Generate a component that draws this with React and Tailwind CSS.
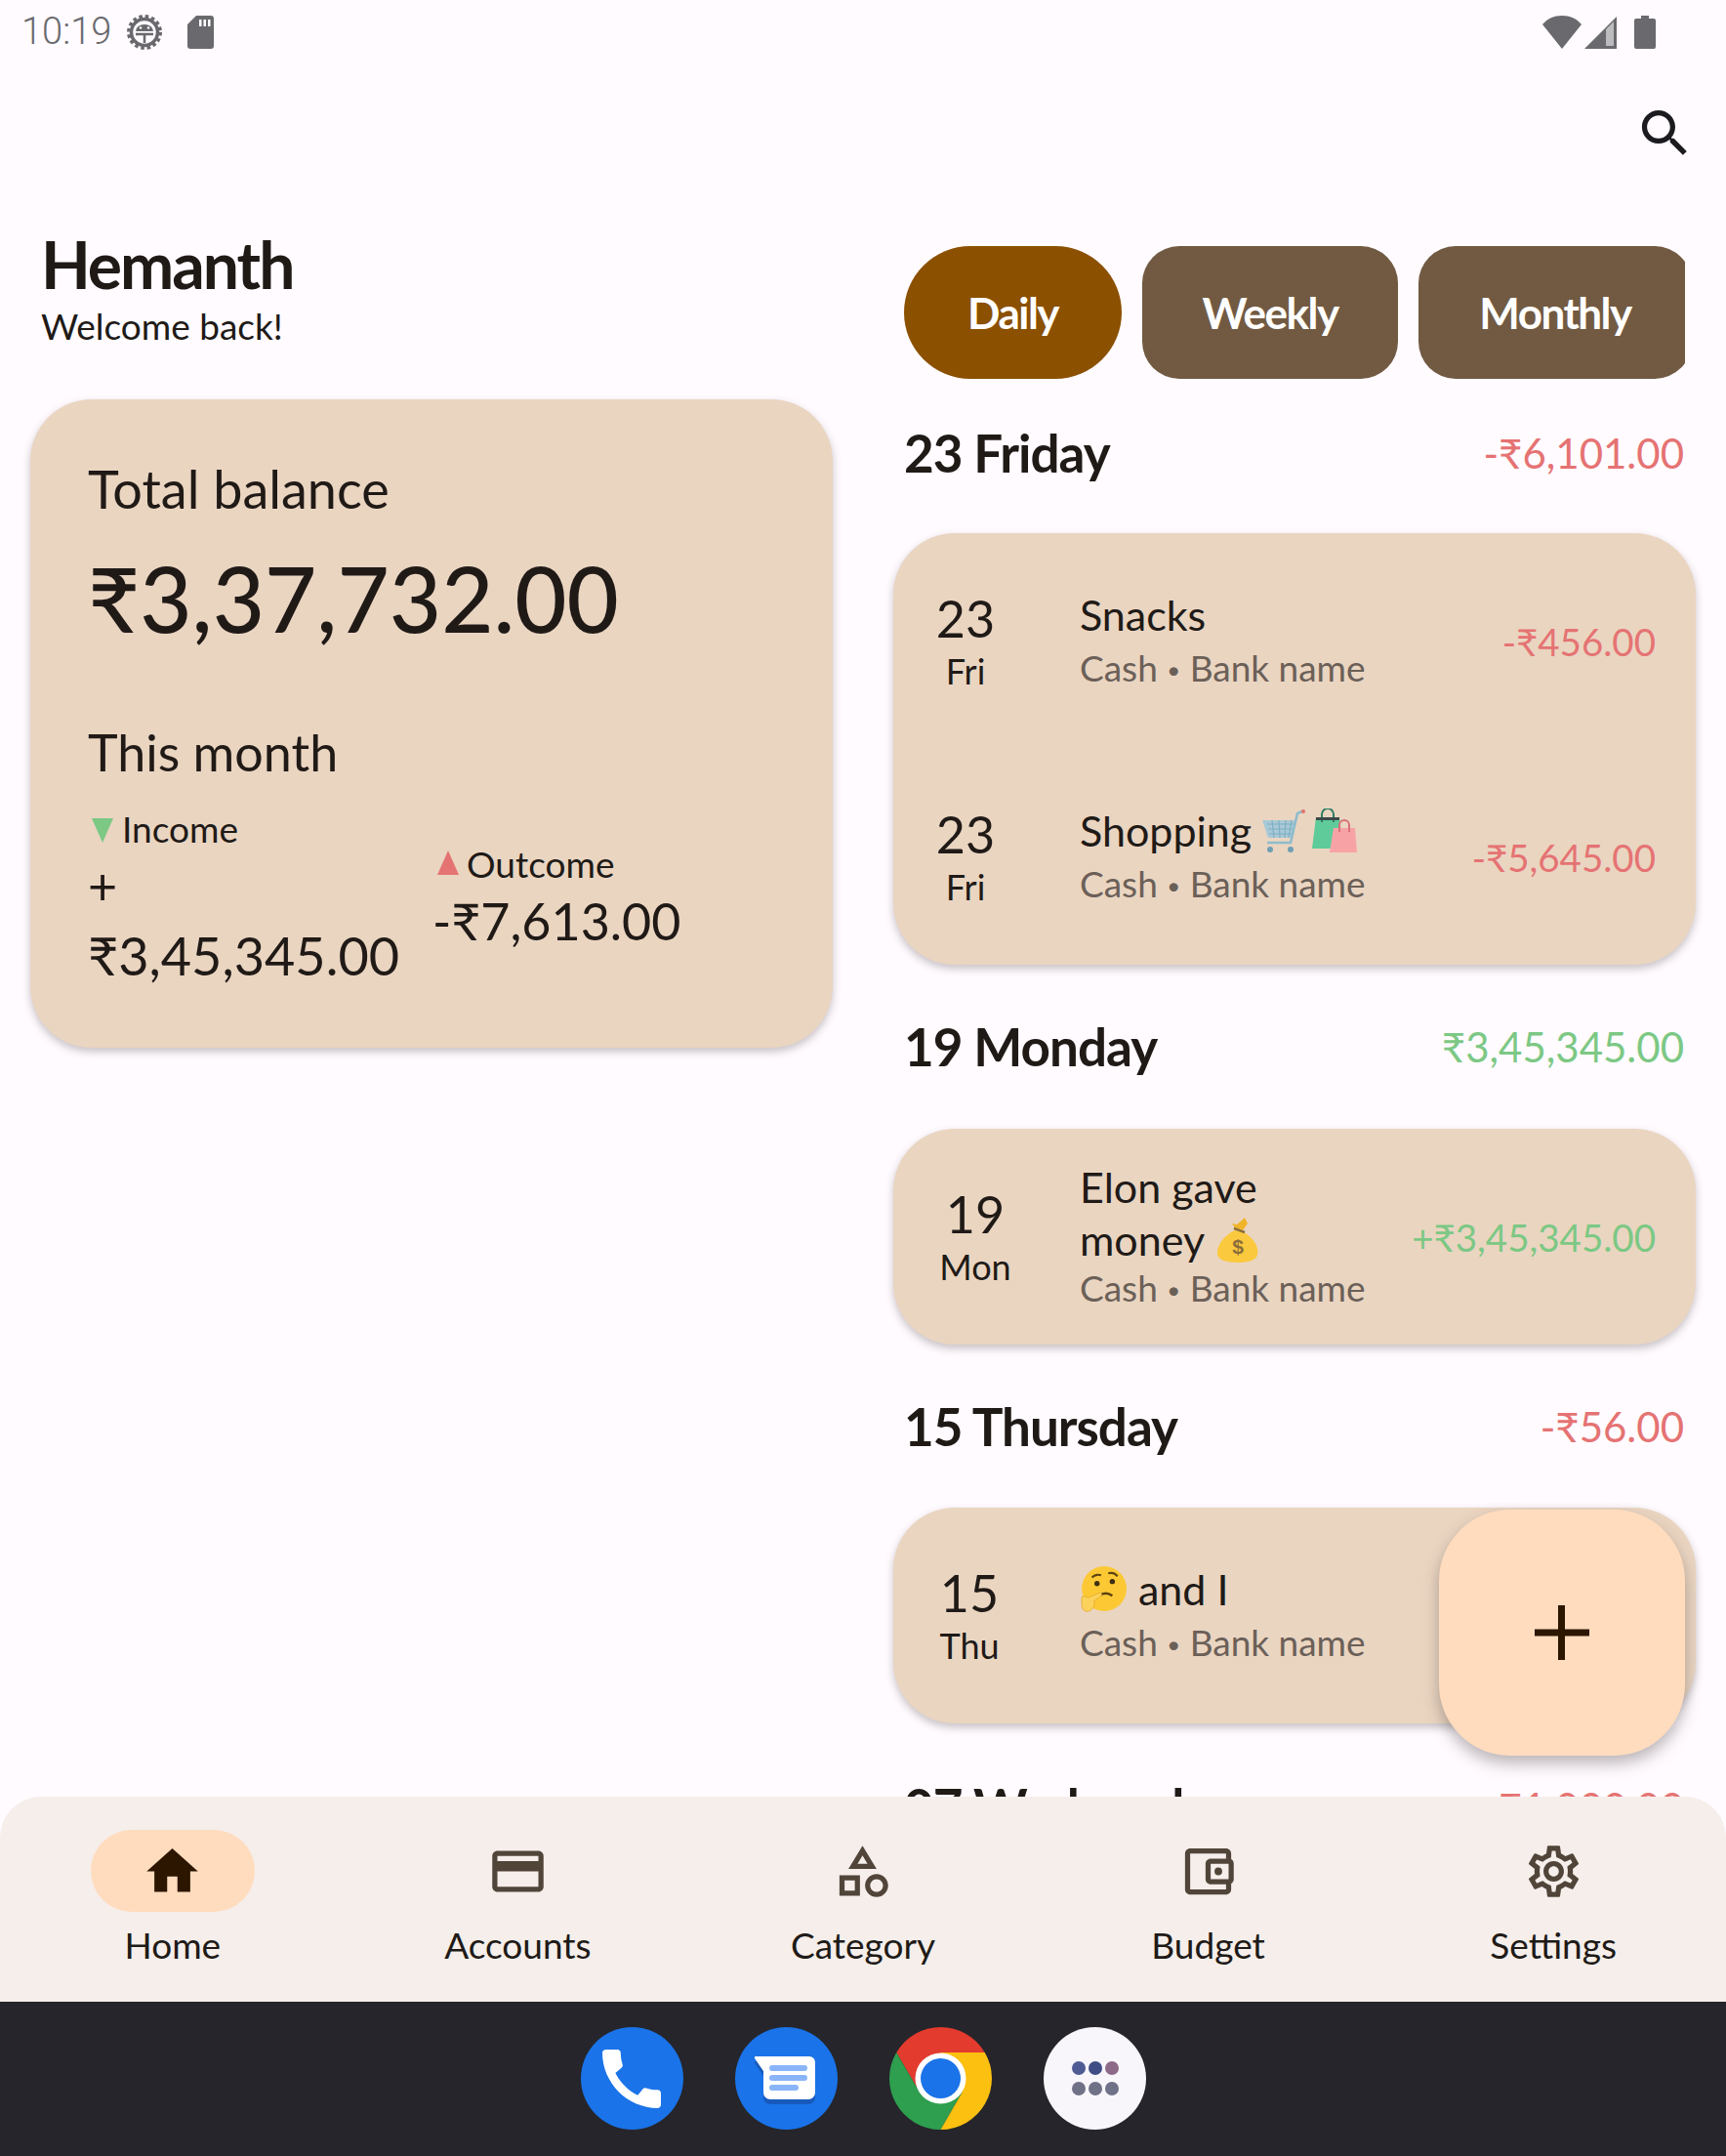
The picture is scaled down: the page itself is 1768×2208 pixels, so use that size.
import React from 'react'

const ICONS = {
    home: 'M10 20v-6h4v6h5v-8h3L12 3 2 12h3v8z',
    card: 'M20 4H4c-1.11 0-1.99.89-1.99 2L2 18c0 1.11.89 2 2 2h16c1.11 0 2-.89 2-2V6c0-1.11-.89-2-2-2zm0 14H4v-6h16v6zm0-10H4V6h16v2z',
    category: 'M12 2l-5.5 9h11L12 2zm0 3.84L13.93 9h-3.87L12 5.84zM17.5 13c-2.49 0-4.5 2.01-4.5 4.5s2.01 4.5 4.5 4.5 4.5-2.01 4.5-4.5-2.01-4.5-4.5-4.5zm0 7c-1.38 0-2.5-1.12-2.5-2.5s1.12-2.5 2.5-2.5 2.5 1.12 2.5 2.5-1.12 2.5-2.5 2.5zM3 21.5h8v-8H3v8zm2-6h4v4H5v-4z',
    wallet: 'M21 7.28V5c0-1.1-.9-2-2-2H5c-1.11 0-2 .9-2 2v14c0 1.1.89 2 2 2h14c1.1 0 2-.9 2-2v-2.28c.59-.35 1-.98 1-1.72V9c0-.74-.41-1.37-1-1.72zM20 9v6h-7V9h7zM5 19V5h14v2h-6c-1.1 0-2 .9-2 2v6c0 1.1.9 2 2 2h6v2H5z M16 10.5a1.5 1.5 0 1 0 0 3a1.5 1.5 0 1 0 0-3z',
    settings: 'M19.43 12.98c.04-.32.07-.64.07-.98 0-.34-.03-.66-.07-.98l2.11-1.65c.19-.15.24-.42.12-.64l-2-3.46c-.09-.16-.26-.25-.44-.25-.06 0-.12.01-.17.03l-2.49 1c-.52-.4-1.08-.73-1.69-.98l-.38-2.65C14.46 2.18 14.25 2 14 2h-4c-.25 0-.46.18-.49.42l-.38 2.65c-.61.25-1.17.59-1.69.98l-2.49-1c-.06-.02-.12-.03-.18-.03-.17 0-.34.09-.43.25l-2 3.46c-.13.22-.07.49.12.64l2.11 1.65c-.04.32-.07.65-.07.98 0 .33.03.66.07.98l-2.11 1.65c-.19.15-.24.42-.12.64l2 3.46c.09.16.26.25.44.25.06 0 .12-.01.17-.03l2.49-1c.52.4 1.08.73 1.69.98l.38 2.65c.03.24.24.42.49.42h4c.25 0 .46-.18.49-.42l.38-2.65c.61-.25 1.17-.59 1.69-.98l2.49 1c.06.02.12.03.18.03.17 0 .34-.09.43-.25l2-3.46c.12-.22.07-.49-.12-.64l-2.11-1.65zm-1.98-1.71c.04.31.05.52.05.73 0 .21-.02.43-.05.73l-.14 1.13.89.7 1.08.84-.7 1.21-1.27-.51-1.04-.42-.9.68c-.43.32-.84.56-1.25.73l-1.06.43-.16 1.13-.2 1.35h-1.4l-.19-1.35-.16-1.13-1.06-.43c-.43-.18-.83-.41-1.23-.71l-.91-.7-1.06.43-1.27.51-.7-1.21 1.08-.84.89-.7-.14-1.13c-.03-.31-.05-.54-.05-.74s.02-.43.05-.73l.14-1.13-.89-.7-1.08-.84.7-1.21 1.27.51 1.04.42.9-.68c.43-.32.84-.56 1.25-.73l1.06-.43.16-1.13.2-1.35h1.39l.19 1.35.16 1.13 1.06.43c.43.18.83.41 1.23.71l.91.7 1.06-.43 1.27-.51.7 1.21-1.07.85-.89.7.14 1.13zM12 8c-2.21 0-4 1.79-4 4s1.79 4 4 4 4-1.79 4-4-1.79-4-4-4zm0 6c-1.1 0-2-.9-2-2s.9-2 2-2 2 .9 2 2-.9 2-2 2z',
    search: 'M15.5 14h-.79l-.28-.27C15.41 12.59 16 11.11 16 9.5 16 5.91 13.09 3 9.5 3S3 5.91 3 9.5 5.91 16 9.5 16c1.61 0 3.09-.59 4.23-1.57l.27.28v.79l5 4.99L20.49 19l-4.99-5zm-6 0C7.01 14 5 11.99 5 9.5S7.01 5 9.5 5 14 7.01 14 9.5 11.99 14 9.5 14z',
    call: 'M20.01 15.38c-1.23 0-2.42-.2-3.53-.56-.35-.12-.74-.03-1.01.24l-1.57 1.97c-2.83-1.35-5.48-3.9-6.89-6.83l1.95-1.66c.27-.28.35-.67.24-1.02-.37-1.11-.56-2.3-.56-3.53 0-.54-.45-.99-.99-.99H4.19C3.65 3 3 3.24 3 3.99 3 13.28 10.73 21 20.01 21c.71 0 .99-.63.99-1.18v-3.45c0-.54-.45-.99-.99-.99z',
}

const Icon = ({ name, className }) => (
    <svg viewBox="0 0 24 24" fill="currentColor" className={className}>
        <path d={ICONS[name]} />
    </svg>
)

const GearStatus = () => (
    <svg viewBox="0 0 38 38" className="w-[38px] h-[38px]">
        <circle cx="19" cy="19" r="16" fill="none" stroke="#6a696e" strokeWidth="4" strokeDasharray="3.5 2.8" />
        <circle cx="19" cy="19" r="13.5" fill="none" stroke="#6a696e" strokeWidth="3.5" />
        <path d="M10 18a9 7 0 0 1 18 0z" fill="#6a696e" />
        <circle cx="15" cy="14.5" r="1.2" fill="#fff" />
        <circle cx="23" cy="14.5" r="1.2" fill="#fff" />
        <path d="M10 21h18M19 21v9" stroke="#6a696e" strokeWidth="2.5" />
    </svg>
)

const SdCard = () => (
    <svg viewBox="0 0 27 34" className="w-[27px] h-[34px]">
        <path d="M9 0h15a3 3 0 0 1 3 3v28a3 3 0 0 1-3 3H3a3 3 0 0 1-3-3V9z" fill="#6a696e" />
        <path d="M12 4h2.500v7H12zM16.500 4H19v7h-2.500zM21 4h2.500v7H21z" fill="#fff" />
    </svg>
)

const StatusIcons = () => (
    <div className="flex items-center">
        <svg viewBox="0 0 40 34" className="w-[40px] h-[34px]">
            <path d="M20 34L0 9C5 3 12 0 20 0s15 3 20 9z" fill="#6a696e" />
        </svg>
        <svg viewBox="0 0 33 34" className="w-[33px] h-[34px] ml-[3px]">
            <path d="M0 34L33 1v33z" fill="#6a696e" />
            <path d="M22 31V14l8-8v25z" fill="#fff" opacity="0.55" />
        </svg>
        <svg viewBox="0 0 22 34" className="w-[22px] h-[34px] ml-[18px]">
            <path d="M7 0h8v3h5a2 2 0 0 1 2 2v27a2 2 0 0 1-2 2H2a2 2 0 0 1-2-2V5a2 2 0 0 1 2-2h5z" fill="#6a696e" />
        </svg>
    </div>
)

const CartEmoji = () => (
    <svg viewBox="0 0 46 46" className="w-[46px] h-[46px] shrink-0">
        <path d="M2 12h33l-3 18H8z" fill="#a9c9d6" />
        <path d="M7 16h27M8 21h25M9 26h23M12 12l2 18M19 12l1 18M26 12l-1 18M32 12l-3 18" stroke="#7fb0c4" strokeWidth="1.2" />
        <path d="M45 2l-7 3-7 30H7" fill="none" stroke="#8fbccc" strokeWidth="2.6" />
        <circle cx="44" cy="3" r="2" fill="#e9716a" />
        <circle cx="10" cy="42" r="3" fill="#6f9fb2" />
        <circle cx="31" cy="42" r="3" fill="#6f9fb2" />
    </svg>
)

const BagsEmoji = () => (
    <svg viewBox="0 0 46 46" className="w-[46px] h-[46px] shrink-0 ml-[7px]">
        <path d="M4 9h24l4 32H0z" fill="#5fcb9a" />
        <path d="M10 14V6a6 6 0 0 1 12 0v8" fill="none" stroke="#2f7f62" strokeWidth="2" />
        <path d="M4 9h24v3H4z" fill="#3a4a4a" />
        <path d="M22 20h22l2 25H18z" fill="#f7a3a6" />
        <path d="M28 24v-7a5 5 0 0 1 10 0v7" fill="none" stroke="#d9707a" strokeWidth="2" />
    </svg>
)

const MoneyEmoji = () => (
    <svg viewBox="0 0 44 46" className="w-[44px] h-[46px] shrink-0 ml-[12px]">
        <path d="M26 14C38 20 44 30 42 38c-1 5-8 8-20 8S2 43 1 38C0 28 8 18 19 13z" fill="#fbc93d" />
        <path d="M20 12l-4-6 5 1 8-7 3 6-5 7z" fill="#f0b429" />
        <path d="M18 11l11 4" stroke="#8a6d3b" strokeWidth="2.4" />
        <text x="22" y="37" textAnchor="middle" fontSize="21" fontWeight="700" fill="#8a6d3b" fontFamily="'Liberation Sans', sans-serif">$</text>
    </svg>
)

const ThinkEmoji = () => (
    <svg viewBox="0 0 46 46" className="w-[48px] h-[48px] shrink-0">
        <ellipse cx="24" cy="22" rx="22" ry="22" fill="#fcc935" />
        <path d="M12 11c3-3 7-3 9-2M28 7c4-1 7 0 9 3" fill="none" stroke="#5a4210" strokeWidth="2" />
        <circle cx="17" cy="17" r="2.6" fill="#3f2f10" />
        <circle cx="32" cy="15" r="2.6" fill="#3f2f10" />
        <path d="M19 29c4-3 9-3 13 0" fill="none" stroke="#5a4210" strokeWidth="2.2" />
        <path d="M2 30c2-1 5 0 6 1l12-5c2 0 2 3 0 4l-6 4c1 3 0 7-3 9-4 3-8 1-9-4z" fill="#fbd35c" stroke="#e7a92e" strokeWidth="0.8" />
    </svg>
)

const Amount = ({ children, green, className }) => (
    <span className={`${green ? 'text-[#7cc884]' : 'text-[#e57373]'} ${className}`}>{children}</span>
)

const Row = ({ day, week, dateClass, cashClass = 'mt-[3px]', children, amount, green }) => (
    <div className="h-[221px] flex items-center">
        <div className={`flex flex-col items-center w-[80px] -mt-[3px] ${dateClass}`}>
            <span className="text-[52px] leading-[64px] text-[#201a17]">{day}</span>
            <span className="text-[36px] leading-[44px] text-[#201a17]">{week}</span>
        </div>
        <div className="flex-1 flex flex-col pl-[77px] text-[#201a17]">
            {children}
            <span className={`text-[37px] leading-[48px] text-[#6b6058] ${cashClass}`}>
                Cash <span className="text-[24px] align-[3px]">•</span> Bank name
            </span>
        </div>
        <Amount green={green} className="text-[38.5px] leading-[48px] shrink-0">{amount}</Amount>
    </div>
)

const Title = ({ children }) => (
    <div className="flex items-center text-[43px] leading-[54px] h-[54px]">{children}</div>
)

const DayHeader = ({ title, amount, green, className }) => (
    <div className={`h-[80px] flex items-center justify-between ml-[11px] mr-[43px] ${className}`}>
        <span className="text-[53px] font-bold tracking-[-1px] text-[#201a17]">{title}</span>
        <Amount green={green} className="text-[42px]">{amount}</Amount>
    </div>
)

const Card = ({ children, className }) => (
    <div className={`bg-[#ead5c1] rounded-[63px] shadow-[0_4px_8px_rgba(70,60,60,0.3)] pl-[34px] pr-[41px] ${className}`}>{children}</div>
)

const Chip = ({ children, active, className }) => (
    <div className={`h-[136px] flex items-center justify-center shrink-0 text-white text-[44px] font-bold tracking-[-1.5px] ${active ? 'bg-[#8b5000] rounded-[68px]' : 'bg-[#725a42] rounded-[38px]'} ${className}`}>
        {children}
    </div>
)

const NavItem = ({ icon, label, active }) => (
    <div className="flex-1 flex flex-col items-center">
        <div className={`w-[168px] h-[84px] rounded-[42px] flex items-center justify-center ${active ? 'bg-[#ffdcbe] text-[#2c1600]' : 'text-[#51453a]'}`}>
            <Icon name={icon} className="w-[63px] h-[63px]" />
        </div>
        <span className="mt-[11px] text-[37px] leading-[46px] text-[#201a17]">{label}</span>
    </div>
)

const Chrome = () => (
    <svg viewBox="0 0 105 105" className="w-[105px] h-[105px]">
        <path d="M97.800 26A52.500 52.500 0 0 0 7.200 26L30 65 52.500 52.500V26z" fill="#e33b2e" />
        <path d="M7.200 26A52.500 52.500 0 0 0 52.500 105L75 66 52.500 52.500 30 65z" fill="#2e9e4f" />
        <path d="M97.800 26A52.500 52.500 0 0 1 52.500 105L75 66 52.500 52.500V26z" fill="#fcc010" />
        <circle cx="52.500" cy="52.500" r="26" fill="#fff" />
        <circle cx="52.500" cy="52.500" r="20.500" fill="#1a73e8" />
    </svg>
)

const Dock = () => (
    <div className="h-[158px] bg-[#25252b] flex items-start pt-[26px] justify-center gap-[53px]">
        <div className="w-[105px] h-[105px] rounded-full bg-[#1a73e8] flex items-center justify-center">
            <Icon name="call" className="w-[80px] h-[80px] text-white" />
        </div>
        <div className="w-[105px] h-[105px] rounded-full bg-[#1a73e8]">
            <svg viewBox="0 0 105 105" className="w-[105px] h-[105px]">
                <path d="M22 31h55a5 5 0 0 1 5 7v30a7 7 0 0 1-7 7H36a7 7 0 0 1-7-7V46L20 33a1.500 1.500 0 0 1 2-2z" fill="#185abc" transform="translate(0 4)" />
                <path d="M22 30h54a6 6 0 0 1 6 6v31a7 7 0 0 1-7 7H36a7 7 0 0 1-7-7V45L20 32a1.500 1.500 0 0 1 2-2z" fill="#fff" />
                <rect x="35" y="39" width="39" height="6" rx="3" fill="#8ab4f8" />
                <rect x="35" y="49" width="39" height="6" rx="3" fill="#8ab4f8" />
                <rect x="35" y="59" width="30" height="6" rx="3" fill="#8ab4f8" />
            </svg>
        </div>
        <Chrome />
        <div className="w-[105px] h-[105px] rounded-full bg-[#f8f6fb]">
            <svg viewBox="0 0 105 105" className="w-[105px] h-[105px]">
                <circle cx="36" cy="42" r="7" fill="#4f5c94" />
                <circle cx="53" cy="42" r="7" fill="#3f4c85" />
                <circle cx="70" cy="42" r="7" fill="#8c6a88" />
                <circle cx="36" cy="63" r="7" fill="#6f7186" />
                <circle cx="53" cy="63" r="7" fill="#6f7186" />
                <circle cx="70" cy="63" r="7" fill="#6f7186" />
            </svg>
        </div>
    </div>
)

const App = () => {
    return (
        <div className="w-[1768px] h-[2208px] flex flex-col overflow-hidden bg-[#fffbff] font-['Lato',sans-serif] text-[#201a17]">
            <div className="h-[65px] shrink-0 flex items-center justify-between pl-[22px] pr-[72px]">
                <div className="flex items-center">
                    <span className="font-['Roboto',sans-serif] font-light text-[38px] text-[#6a696e]">10:19</span>
                    <span className="ml-[15px]"><GearStatus /></span>
                    <span className="ml-[25px]"><SdCard /></span>
                </div>
                <StatusIcons />
            </div>

            <div className="flex-1 min-h-0 relative overflow-hidden">
                <div className="h-[187px] flex justify-end pr-[31px] pt-[40px]">
                    <Icon name="search" className="w-[63px] h-[63px] text-[#1c1b1f]" />
                </div>
                <div className="flex">
                    <div className="w-[884px] shrink-0">
                        <div className="h-[178px] pl-[42px] -mt-[21px]">
                            <div className="text-[66px] leading-[80px] font-bold tracking-[-2px]">Hemanth</div>
                            <div className="text-[37px] leading-[46px]">Welcome back!</div>
                        </div>
                        <div className="ml-[31px] w-[822px] h-[664px] bg-[#ead5c1] rounded-[63px] shadow-[0_4px_8px_rgba(70,60,60,0.3)] pl-[59px] pt-[57px] text-[#201a17]">
                            <div className="text-[54px] leading-[70px]">Total balance</div>
                            <div className="mt-[18px] text-[92px] leading-[118px] font-medium">₹3,37,732.00</div>
                            <div className="mt-[62px] text-[52px] leading-[72px]">This month</div>
                            <div className="mt-[21px] flex items-center">
                                <div className="w-[353px]">
                                    <div className="flex items-center text-[37px] leading-[44px]">
                                        <svg viewBox="0 0 22 28" className="w-[22px] h-[28px] ml-[4px] mr-[9px]"><path d="M0 3h22L11 28z" fill="#7cc884" /></svg>
                                        Income
                                    </div>
                                    <div className="text-[52px] leading-[72px]">+</div>
                                    <div className="text-[54px] leading-[72px]">₹3,45,345.00</div>
                                </div>
                                <div>
                                    <div className="flex items-center text-[37px] leading-[44px]">
                                        <svg viewBox="0 0 22 28" className="w-[22px] h-[28px] ml-[5px] mr-[8px]"><path d="M0 25h22L11 0z" fill="#e57373" /></svg>
                                        Outcome
                                    </div>
                                    <div className="text-[52px] leading-[72px]">-₹7,613.00</div>
                                </div>
                            </div>
                        </div>
                    </div>

                    <div className="flex-1 min-w-0 pl-[31px]">
                        <div className="w-[800px] ml-[11px] overflow-hidden flex gap-[21px]">
                            <Chip active className="w-[223px]">Daily</Chip>
                            <Chip className="w-[262px]">Weekly</Chip>
                            <Chip className="w-[280px]">Monthly</Chip>
                        </div>
                        <DayHeader title="23 Friday" amount="-₹6,101.00" className="mt-[36px]" />
                        <Card className="mt-[42px] w-[822px]">
                            <Row day="23" week="Fri" amount="-₹456.00">
                                <Title>Snacks</Title>
                            </Row>
                            <Row day="23" week="Fri" amount="-₹5,645.00">
                                <Title>Shopping<span className="ml-[9px]" /><CartEmoji /><BagsEmoji /></Title>
                            </Row>
                        </Card>
                        <DayHeader title="19 Monday" amount="₹3,45,345.00" green className="mt-[44px]" />
                        <Card className="mt-[44px] w-[822px]">
                            <Row day="19" week="Mon" dateClass="translate-x-[10px]" cashClass="-mt-[2px]" amount="+₹3,45,345.00" green>
                                <Title>Elon gave</Title>
                                <Title>money<MoneyEmoji /></Title>
                            </Row>
                        </Card>
                        <DayHeader title="15 Thursday" amount="-₹56.00" className="mt-[44px]" />
                        <Card className="mt-[43px] w-[822px]">
                            <Row day="15" week="Thu" dateClass="translate-x-[4px]" amount="">
                                <Title><ThinkEmoji /><span className="ml-[12px]">and I</span></Title>
                            </Row>
                        </Card>
                        <DayHeader title="07 Wednesday" amount="-₹1,000.00" className="mt-[46px]" />
                    </div>
                </div>

                <div className="absolute left-[1474px] top-[1481px] w-[252px] h-[252px] rounded-[73px] bg-[#ffdcbe] shadow-[0_8px_16px_rgba(60,50,50,0.35)] flex items-center justify-center">
                    <svg viewBox="0 0 56 56" className="w-[56px] h-[56px]"><path d="M24 0h7v24.500h25v7H31V56h-7V31.500H0v-7h24z" fill="#2c1600" /></svg>
                </div>
            </div>

            <div className="h-[210px] shrink-0 rounded-t-[42px] bg-[#f5eeea] pt-[34px] flex">
                <NavItem icon="home" label="Home" active />
                <NavItem icon="card" label="Accounts" />
                <NavItem icon="category" label="Category" />
                <NavItem icon="wallet" label="Budget" />
                <NavItem icon="settings" label="Settings" />
            </div>

            <Dock />
        </div>
    )
}

export default App
